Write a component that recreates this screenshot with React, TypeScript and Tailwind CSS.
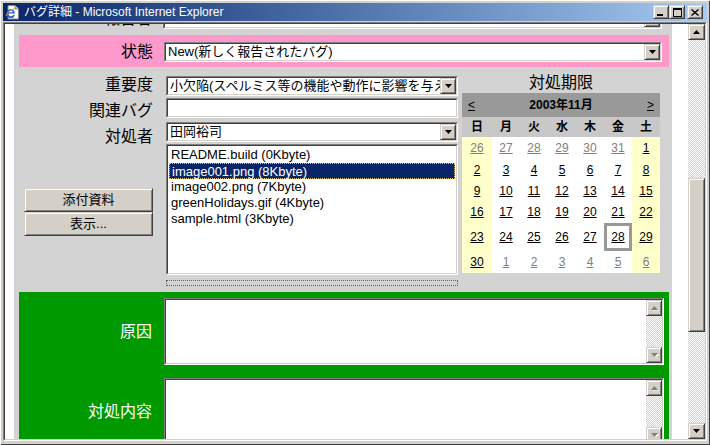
import React from 'react';

const raised = "border border-[#d4d0c8] border-r-[#404040] border-b-[#404040] shadow-[inset_1px_1px_0_#ffffff,inset_-1px_-1px_0_#808080] bg-[#d4d0c8]";
const sunkOuter = "border border-[#808080] border-r-white border-b-white";
const sunkInner = "border border-[#404040] border-r-[#d4d0c8] border-b-[#d4d0c8] bg-white";
const checker = "bg-[repeating-conic-gradient(#d4d0c8_0%_25%,#ffffff_0%_50%)] bg-[length:2px_2px]";

const Arrow: React.FC<{ up?: boolean; gray?: boolean }> = ({ up, gray }) => (
    <svg width="7" height="4" viewBox="0 0 7 4" className={gray ? "overflow-visible" : ""}>
        {gray && <polygon points={up ? "4.5,1 8,4.5 1,4.5" : "1,1 8,1 4.5,4.5"} fill="#ffffff" />}
        <polygon points={up ? "3.5,0 7,4 0,4" : "0,0 7,0 3.5,4"} fill={gray ? "#808080" : "#000000"} />
    </svg>
);

const DropBtn: React.FC = () => (
    <div className={`w-[16px] h-full shrink-0 flex items-center justify-center ${raised}`}>
        <Arrow />
    </div>
);

const Select: React.FC<{ text?: string; className?: string }> = ({ text, className }) => (
    <div className={`${sunkOuter} h-[20px] ${className ?? ''}`}>
        <div className={`${sunkInner} h-full flex`}>
            <div className="flex-1 min-w-0 overflow-hidden whitespace-nowrap text-[13px] leading-[16px] pl-[2px]">{text}</div>
            <DropBtn />
        </div>
    </div>
);

const TextArea: React.FC = () => (
    <div className={`${sunkOuter} flex-1 h-[67px]`}>
        <div className={`${sunkInner} h-full flex justify-end`}>
            <div className="w-[16px] h-full flex flex-col">
                <div className={`h-[16px] flex items-center justify-center ${raised}`}><Arrow up gray /></div>
                <div className={`flex-1 ${checker}`}></div>
                <div className={`h-[16px] flex items-center justify-center ${raised}`}><Arrow gray /></div>
            </div>
        </div>
    </div>
);

const TitleBar: React.FC = () => (
    <div className="h-[18px] shrink-0 bg-linear-to-r from-[#0a246a] to-[#a6caf0] flex items-center pl-[2px] pr-[4px]">
        <svg width="16" height="16" viewBox="0 0 16 16">
            <path d="M3 1.5h7l3.5 3.5v10H3z" fill="#ffffff" stroke="#808080" />
            <path d="M10 1.5v3.5h3.5" fill="#d4d0c8" stroke="#808080" />
            <path d="M1.5 9.5a4.2 4.2 0 1 1 8.4 0H3.3a2.6 2.6 0 0 0 5 1.2h1.5a4.2 4.2 0 0 1-8.3-1.2z M3.4 8.3h4.6a2.4 2.4 0 0 0-4.6 0z" fill="#1f5fd0" fillRule="evenodd" />
            <path d="M1 12c2-5 7-8 10-7" stroke="#e8a020" strokeWidth="1" fill="none" />
        </svg>
        <span className="ml-[3px] text-white text-[12px] leading-[14px] whitespace-nowrap">バグ詳細 - Microsoft Internet Explorer</span>
        <div className="flex-1"></div>
        <div className={`w-[16px] h-[14px] flex items-end justify-start pl-[3px] pb-[2px] ${raised}`}>
            <div className="w-[6px] h-[2px] bg-black"></div>
        </div>
        <div className={`w-[16px] h-[14px] flex items-center justify-center ${raised}`}>
            <div className="w-[9px] h-[9px] border border-black border-t-2"></div>
        </div>
        <div className={`ml-[2px] w-[16px] h-[14px] flex items-center justify-center ${raised}`}>
            <svg width="8" height="7" viewBox="0 0 8 7">
                <path d="M0.5 0.5l7 6M7.5 0.5l-7 6" stroke="#000000" strokeWidth="1.4" />
            </svg>
        </div>
    </div>
);

type Day = { n: number; other?: boolean };

const weeks: Day[][] = [
    [{ n: 26, other: true }, { n: 27, other: true }, { n: 28, other: true }, { n: 29, other: true }, { n: 30, other: true }, { n: 31, other: true }, { n: 1 }],
    [{ n: 2 }, { n: 3 }, { n: 4 }, { n: 5 }, { n: 6 }, { n: 7 }, { n: 8 }],
    [{ n: 9 }, { n: 10 }, { n: 11 }, { n: 12 }, { n: 13 }, { n: 14 }, { n: 15 }],
    [{ n: 16 }, { n: 17 }, { n: 18 }, { n: 19 }, { n: 20 }, { n: 21 }, { n: 22 }],
    [{ n: 23 }, { n: 24 }, { n: 25 }, { n: 26 }, { n: 27 }, { n: 28 }, { n: 29 }],
    [{ n: 30 }, { n: 1, other: true }, { n: 2, other: true }, { n: 3, other: true }, { n: 4, other: true }, { n: 5, other: true }, { n: 6, other: true }],
];
const rowHeights = ["h-[22px]", "h-[21px]", "h-[21px]", "h-[22px]", "h-[28px]", "h-[22px]"];
const dayNames = ["日", "月", "火", "水", "木", "金", "土"];

const Calendar: React.FC = () => (
    <div className="w-[198px] ml-[4px] flex flex-col">
        <div className="h-[20px] mt-[6px] flex items-center justify-center text-[16px]">対処期限</div>
        <div className="h-[24px] bg-[#999999] flex items-center justify-between px-[6px] text-[12px]">
            <span className="underline">&lt;</span>
            <span className="font-bold">2003年11月</span>
            <span className="underline">&gt;</span>
        </div>
        <div className="grid grid-cols-[30px_repeat(6,28px)] h-[20px] bg-[#c8c8c8] text-[12px] font-bold">
            {dayNames.map((d) => (
                <div key={d} className="flex items-center justify-center">{d}</div>
            ))}
        </div>
        {weeks.map((w, i) => (
            <div key={i} className={`grid grid-cols-[30px_repeat(6,28px)] ${rowHeights[i]} text-[12px]`}>
                {w.map((d, j) => (
                    <div
                        key={j}
                        className={`flex items-center justify-center underline ${j === 0 || j === 6 ? 'bg-[#ffffcc]' : 'bg-white'} ${d.other ? 'text-[#808080]' : 'text-black'} ${i === 4 && j === 5 ? 'border-[3px] border-[#999999]' : ''}`}
                    >
                        {d.n}
                    </div>
                ))}
            </div>
        ))}
    </div>
);

const files = ["README.build (0Kbyte)", "image001.png (8Kbyte)", "image002.png (7Kbyte)", "greenHolidays.gif (4Kbyte)", "sample.html (3Kbyte)"];

const App: React.FC = () => {
    return (
        <div className="font-['Liberation_Sans','Noto_Sans_CJK_JP',sans-serif] text-black w-[710px] h-[445px] bg-[#d4d0c8] pt-[3px] px-[3px] pb-[4px] flex flex-col overflow-hidden shadow-[inset_1px_1px_0_#ffffff,inset_-1px_-1px_0_#404040]">
            <TitleBar />
            <div className={`mt-[1px] flex-1 min-h-0 ${sunkOuter}`}>
                <div className="h-full flex border border-[#404040] border-r-[#d4d0c8] border-b-[#d4d0c8]">
                    <div className="flex-1 bg-white pl-[9px] pr-[16px] overflow-hidden">
                        <div className="h-full bg-[#d3d3d3] pl-[5px] pr-[3px] flex flex-col overflow-hidden">
                            {/* row cut off by scrolling */}
                            <div className="h-[11px] shrink-0 overflow-hidden flex items-end pb-[6px]">
                                <div className="flex items-center">
                                    <div className="w-[144px] text-right pr-[11px] text-[16px] leading-[20px]">報告者</div>
                                    <Select className="w-[499px]" />
                                </div>
                            </div>

                            <div className="h-[32px] shrink-0 bg-[#ff99cc] flex pt-[7px] pr-[7px]">
                                <div className="w-[145px] text-right pr-[11px] text-[16px] leading-[20px]">状態</div>
                                <Select className="flex-1" text="New(新しく報告されたバグ)" />
                            </div>

                            <div className="h-[225px] shrink-0 flex">
                                <div className="w-[147px] flex flex-col pt-[5px]">
                                    <div className="h-[26px] flex items-center justify-end pr-[13px] text-[16px]">重要度</div>
                                    <div className="h-[26px] flex items-center justify-end pr-[13px] text-[16px]">関連バグ</div>
                                    <div className="h-[26px] flex items-center justify-end pr-[13px] text-[16px]">対処者</div>
                                    <div className={`mt-[38px] ml-[5px] w-[129px] h-[24px] flex items-center justify-center text-[13px] ${raised}`}>添付資料</div>
                                    <div className={`ml-[5px] w-[129px] h-[24px] flex items-center justify-center text-[13px] ${raised}`}>表示...</div>
                                </div>
                                <div className="w-[292px] flex flex-col pt-[9px]">
                                    <Select text="小欠陥(スペルミス等の機能や動作に影響を与えない)" />
                                    <div className={`mt-[2px] h-[20px] ${sunkOuter}`}>
                                        <div className={`${sunkInner} h-full`}></div>
                                    </div>
                                    <Select className="mt-[4px]" text="田岡裕司" />
                                    <div className={`mt-[2px] h-[131px] ${sunkOuter}`}>
                                        <div className={`${sunkInner} h-full pt-[1px] px-[1px] text-[13px]`}>
                                            {files.map((f, i) => (
                                                <div
                                                    key={f}
                                                    className={`h-[16px] leading-[16px] pl-[2px] whitespace-nowrap ${i === 1 ? 'bg-[#0a246a] text-white border border-dotted border-[#e0c070] leading-[14px] pl-[1px]' : ''}`}
                                                >
                                                    {f}
                                                </div>
                                            ))}
                                        </div>
                                    </div>
                                    <div className="mt-[5px] h-[6px] border border-dotted border-[#606060]"></div>
                                </div>
                                <Calendar />
                            </div>

                            <div className="flex-1 bg-[#009900] pt-[6px] pr-[5px] flex flex-col gap-[13px]">
                                <div className="flex shrink-0">
                                    <div className="w-[145px] flex items-center justify-end pr-[12px] text-white text-[16px]">原因</div>
                                    <TextArea />
                                </div>
                                <div className="flex shrink-0">
                                    <div className="w-[145px] flex items-center justify-end pr-[12px] text-white text-[16px]">対処内容</div>
                                    <TextArea />
                                </div>
                            </div>
                        </div>
                    </div>

                    <div className="w-[17px] flex flex-col">
                        <div className={`h-[16px] flex items-center justify-center ${raised}`}><Arrow up /></div>
                        <div className={`flex-1 ${checker} flex flex-col`}>
                            <div className="h-[138px]"></div>
                            <div className={`h-[154px] ${raised}`}></div>
                        </div>
                        <div className={`h-[16px] flex items-center justify-center ${raised}`}><Arrow /></div>
                    </div>
                </div>
            </div>
        </div>
    );
};

export default App;
